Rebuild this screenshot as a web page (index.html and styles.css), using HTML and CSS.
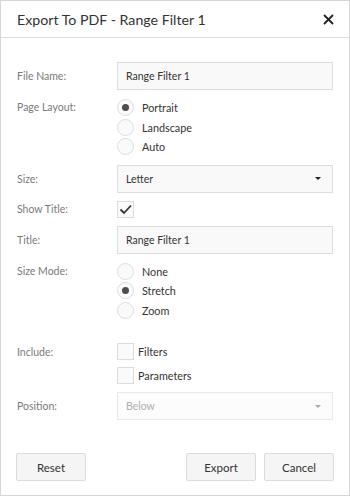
FILE: index.html
```html
<!DOCTYPE html>
<html>

<head>
    <meta charset="UTF-8">
    <title>Export To PDF</title>
    <link rel="stylesheet" href="styles.css">
</head>

<body>
    <div class="dialog">
        <div class="dialog-header">
            <span class="dialog-title">Export To PDF - Range Filter 1</span>
            <span class="close-btn">
                <svg width="11" height="11" viewBox="0 0 11 11">
                    <path d="M1 1 L10 10 M10 1 L1 10" stroke="#222" stroke-width="1.8" fill="none"/>
                </svg>
            </span>
        </div>

        <div class="dialog-body">
            <div class="form-row">
                <div class="label">File Name:</div>
                <div class="text-box">Range Filter 1</div>
            </div>

            <div class="form-row">
                <div class="label label-top">Page Layout:</div>
                <div class="radio-group">
                    <div class="radio-item"><span class="radio checked"></span>Portrait</div>
                    <div class="radio-item"><span class="radio"></span>Landscape</div>
                    <div class="radio-item"><span class="radio"></span>Auto</div>
                </div>
            </div>

            <div class="form-row">
                <div class="label">Size:</div>
                <div class="text-box select-box">Letter<span class="arrow"></span></div>
            </div>

            <div class="form-row">
                <div class="label">Show Title:</div>
                <div class="check-row">
                    <span class="checkbox">
                        <svg width="13" height="11" viewBox="0 0 13 11">
                            <path d="M1.5 5.5 L5 9 L12 1.5" stroke="#333" stroke-width="1.8" fill="none"/>
                        </svg>
                    </span>
                </div>
            </div>

            <div class="form-row">
                <div class="label">Title:</div>
                <div class="text-box">Range Filter 1</div>
            </div>

            <div class="form-row">
                <div class="label label-top">Size Mode:</div>
                <div class="radio-group">
                    <div class="radio-item"><span class="radio"></span>None</div>
                    <div class="radio-item"><span class="radio checked"></span>Stretch</div>
                    <div class="radio-item"><span class="radio"></span>Zoom</div>
                </div>
            </div>

            <div class="form-row include-row">
                <div class="label label-top">Include:</div>
                <div class="check-group">
                    <div class="check-item"><span class="checkbox"></span>Filters</div>
                    <div class="check-item"><span class="checkbox"></span>Parameters</div>
                </div>
            </div>

            <div class="form-row">
                <div class="label">Position:</div>
                <div class="text-box select-box disabled">Below<span class="arrow"></span></div>
            </div>
        </div>

        <div class="dialog-footer">
            <button class="btn">Reset</button>
            <div class="footer-right">
                <button class="btn">Export</button>
                <button class="btn">Cancel</button>
            </div>
        </div>
    </div>
</body>

</html>
```

FILE: styles.css
```css
body {
    margin: 0;
    padding: 0;
    font-family: Lato, "Open Sans", sans-serif;
    background-color: white;
    color: #333;
}

.dialog {
    width: 350px;
    height: 496px;
    box-sizing: border-box;
    border: 1px solid #d6d6d6;
    display: flex;
    flex-direction: column;
    background-color: white;
}

.dialog-header {
    height: 36px;
    border-bottom: 1px solid #dcdcdc;
    display: flex;
    align-items: center;
    justify-content: space-between;
    padding: 0 15px 0 16px;
}

.dialog-title {
    font-size: 14.2px;
    color: #333;
}

.close-btn {
    display: flex;
    align-items: center;
    margin-top: 1px;
}

.dialog-body {
    flex: 1;
    padding: 24px 16px 0 16px;
    display: flex;
    flex-direction: column;
    gap: 8px;
}

.form-row {
    display: grid;
    grid-template-columns: 100px 216px;
    align-items: center;
}

.include-row {
    margin-top: 15px;
}

.label {
    font-size: 10.5px;
    line-height: 16px;
    color: #7a7a7a;
}

.label-top {
    align-self: start;
    padding-top: 1px;
}

.text-box {
    height: 28px;
    box-sizing: border-box;
    border: 1px solid #dedede;
    background-color: #f9f9f9;
    font-size: 10.5px;
    color: #333;
    padding: 0 8px;
    display: flex;
    align-items: center;
}

.select-box {
    justify-content: space-between;
}

.arrow {
    width: 0;
    height: 0;
    border-left: 3px solid transparent;
    border-right: 3px solid transparent;
    border-top: 3px solid #222;
    margin-right: 3px;
}

.disabled {
    color: #b0b0b0;
    background-color: #fcfcfc;
    border-color: #e8e8e8;
}

.disabled .arrow {
    border-top-color: #aaa;
}

.radio-group {
    display: flex;
    flex-direction: column;
}

.radio-item {
    height: 19.5px;
    display: flex;
    align-items: center;
    font-size: 10.8px;
    color: #333;
}

.radio {
    width: 15px;
    height: 15px;
    border: 1px solid #dcdcdc;
    border-radius: 50%;
    background-color: #fafafa;
    margin-right: 8px;
    display: flex;
    align-items: center;
    justify-content: center;
}

.radio.checked::after {
    content: "";
    width: 7px;
    height: 7px;
    border-radius: 50%;
    background-color: #4d4d4d;
}

.check-row {
    display: flex;
    height: 17px;
}

.checkbox {
    width: 15px;
    height: 15px;
    border: 1px solid #dcdcdc;
    background-color: #fafafa;
    display: flex;
    align-items: center;
    justify-content: center;
    margin-right: 4px;
}

.check-group {
    display: flex;
    flex-direction: column;
    gap: 7px;
}

.check-item {
    height: 17px;
    display: flex;
    align-items: center;
    font-size: 10.8px;
    color: #333;
}

.dialog-footer {
    display: flex;
    justify-content: space-between;
    padding: 0 15px 14px 15px;
}

.footer-right {
    display: flex;
    gap: 8px;
}

.btn {
    width: 70px;
    height: 28px;
    border: 1px solid #dcdcdc;
    border-radius: 2px;
    background-color: #f5f5f5;
    font-family: Lato, "Open Sans", sans-serif;
    font-size: 11.5px;
    color: #333;
    padding: 0;
}
```
